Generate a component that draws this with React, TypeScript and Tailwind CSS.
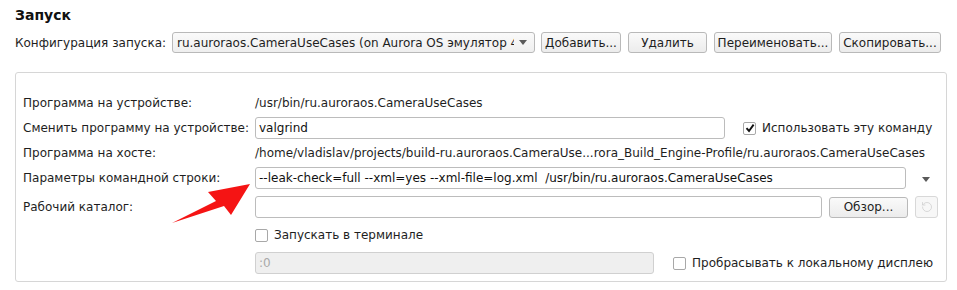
import { RotateCcw } from 'lucide-react'

const font = { fontFamily: '"DejaVu Sans", Verdana, sans-serif' }

function Triangle() {
  return (
    <svg width="8" height="5" viewBox="0 0 8 5" className="shrink-0">
      <path d="M0 0 L8 0 L4 5 Z" fill="#5a5a5a" />
    </svg>
  )
}

function Button({ children, w }: { children: React.ReactNode; w: string }) {
  return (
    <div
      className={`${w} h-[21px] shrink-0 flex items-center justify-center rounded-[3px] border border-[#b9b9b9] bg-gradient-to-b from-[#fafafa] to-[#ececec] text-[12px] text-[#1e1e1e]`}
    >
      {children}
    </div>
  )
}

function CheckBox({ checked }: { checked?: boolean }) {
  return (
    <div className="w-[13px] h-[13px] shrink-0 rounded-[2px] border border-[#a8a8a8] bg-white flex items-center justify-center">
      {checked && (
        <svg width="10" height="10" viewBox="0 0 10 10">
          <path d="M1.5 5.2 L4 8 L8.6 1.6" fill="none" stroke="#111" strokeWidth="1.9" />
        </svg>
      )}
    </div>
  )
}

function Row({ label, children, className = '' }: { label?: string; children: React.ReactNode; className?: string }) {
  return (
    <div className={`flex items-center h-[22px] ${className}`}>
      <div className="w-[232px] shrink-0 text-[12px] text-[#1e1e1e] whitespace-nowrap">{label}</div>
      <div className="flex-1 flex items-center min-w-0">{children}</div>
    </div>
  )
}

export default function App() {
  return (
    <div className="w-[957px] h-[290px] bg-white relative overflow-hidden" style={font}>
      <div className="pl-[15px] pt-[7px]">
        <div className="text-[14px] font-bold text-[#111] leading-[17px]">Запуск</div>

        {/* Run configuration */}
        <div className="flex items-center mt-[8px] h-[21px]">
          <span className="text-[12px] text-[#1e1e1e] w-[157px] shrink-0">Конфигурация запуска:</span>
          <div className="w-[363px] h-[21px] shrink-0 flex items-center rounded-[3px] border border-[#b9b9b9] bg-gradient-to-b from-[#fafafa] to-[#efefef] pl-[4px] pr-[7px]">
            <span className="flex-1 min-w-0 overflow-hidden whitespace-pre text-[12px] text-[#1e1e1e]">
              ru.auroraos.CameraUseCases (on Aurora OS эмулятор 4.0)
            </span>
            <span className="ml-[5px]"><Triangle /></span>
          </div>
          <div className="flex items-center gap-[7px] ml-[6px]">
            <Button w="w-[80px]">Добавить...</Button>
            <Button w="w-[79px]">Удалить</Button>
            <Button w="w-[118px]">Переименовать...</Button>
            <Button w="w-[102px]">Скопировать...</Button>
          </div>
        </div>

        {/* Settings panel */}
        <div className="mt-[19px] w-[932px] h-[210px] rounded-[3px] border border-[#d6d6d6] pl-[7px] pt-[19px]">
          <Row label="Программа на устройстве:">
            <span className="text-[12px] text-[#1e1e1e]">/usr/bin/ru.auroraos.CameraUseCases</span>
          </Row>
          <Row label="Сменить программу на устройстве:" className="mt-[3px]">
            <div className="w-[470px] h-[22px] shrink-0 rounded-[3px] border border-[#bcbcbc] bg-white flex items-center pl-[3px] text-[12px] text-[#111]">
              valgrind
            </div>
            <div className="ml-[18px]"><CheckBox checked /></div>
            <span className="ml-[6px] text-[12px] text-[#1e1e1e] whitespace-nowrap">Использовать эту команду</span>
          </Row>
          <Row label="Программа на хосте:" className="mt-[3px]">
            <span className="text-[12px] text-[#1e1e1e] whitespace-nowrap">
              /home/vladislav/projects/build-ru.auroraos.CameraUse...rora_Build_Engine-Profile/ru.auroraos.CameraUseCases
            </span>
          </Row>
          <Row label="Параметры командной строки:" className="mt-[3px]">
            <div className="w-[651px] h-[22px] shrink-0 rounded-[3px] border border-[#bcbcbc] bg-white flex items-center pl-[3px] text-[12px] text-[#111] whitespace-pre">
              --leak-check=full --xml=yes --xml-file=log.xml  /usr/bin/ru.auroraos.CameraUseCases
            </div>
            <div className="ml-[16px] mt-[2px]"><Triangle /></div>
          </Row>
          <Row label="Рабочий каталог:" className="mt-[7px]">
            <div className="w-[567px] h-[22px] shrink-0 rounded-[3px] border border-[#bcbcbc] bg-white" />
            <div className="ml-[7px]"><Button w="w-[79px]">Обзор...</Button></div>
            <div className="ml-[7px] w-[23px] h-[22px] shrink-0 rounded-[3px] border border-[#d8d8d8] bg-[#f7f7f7] flex items-center justify-center">
              <RotateCcw size={12} color="#cfcfcf" strokeWidth={1.6} />
            </div>
          </Row>
          <Row className="mt-[6px]">
            <CheckBox />
            <span className="ml-[6px] text-[12px] text-[#1e1e1e]">Запускать в терминале</span>
          </Row>
          <Row className="mt-[6px]">
            <div className="w-[399px] h-[22px] shrink-0 rounded-[3px] border border-[#d0d0d0] bg-[#efefef] flex items-center pl-[3px] text-[12px] text-[#a9a9a9]">
              :0
            </div>
            <div className="ml-[19px]"><CheckBox /></div>
            <span className="ml-[6px] text-[12px] text-[#1e1e1e] whitespace-nowrap">Пробрасывать к локальному дисплею</span>
          </Row>
        </div>
      </div>

      {/* Red annotation arrow */}
      <svg className="absolute left-0 top-0 pointer-events-none" width="957" height="290">
        <polygon
          points="172,223 216,201 208,192 250,184 231,215 224,206"
          fill="#f51414"
        />
      </svg>
    </div>
  )
}
